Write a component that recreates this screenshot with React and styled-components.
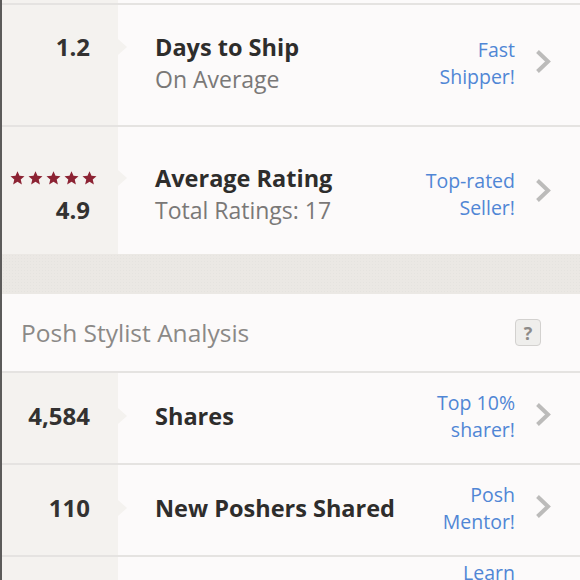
import React from "react";
import styled, { createGlobalStyle } from "styled-components";

const GlobalStyle = createGlobalStyle`
  html, body { margin: 0; padding: 0; background: #fcfafa; }
  body { font-family: "Open Sans", Lato, Arial, sans-serif; -webkit-font-smoothing: antialiased; }
`;

const SIDE = 118;
const SIDE_BG = "#f4f2ef";
const LINE = "#e5e3e1";

const Page = styled.div`
  height: 580px;
  overflow: hidden;
  border-left: 2px solid #5c5b5a;
  background: #fcfafa;
`;

const Row = styled.div`
  display: grid;
  grid-template-columns: ${SIDE - 2}px 1fr auto 16px;
  grid-template-rows: 1fr auto auto 1fr;
  height: ${(p) => p.$h}px;
  box-sizing: border-box;
  padding-top: ${(p) => p.$pt || 0}px;
  padding-bottom: ${(p) => p.$pb || 0}px;
  border-top: 2px solid ${LINE};
  padding-right: 29px;
  background: #fcfafa;
`;

const Side = styled.div`
  grid-column: 1;
  grid-row: 1 / -1;
  margin-top: ${(p) => -(p.$pt || 0)}px;
  margin-bottom: ${(p) => -(p.$pb || 0)}px;
  padding-top: ${(p) => p.$pt || 0}px;
  padding-bottom: ${(p) => p.$pb || 0}px;
  display: grid;
  grid-template-rows: subgrid;
  background: ${SIDE_BG};
  justify-items: end;
  align-items: center;
  padding-right: 28px;
`;

const Number = styled.div`
  grid-row: ${(p) => p.$line};
  align-self: center;
  font-weight: 700;
  font-size: 24px;
  line-height: 32px;
  color: #333231;
`;

const Stars = styled.div`
  grid-row: 2;
  display: flex;
  gap: 3px;
  margin-right: -7px;
`;

const Title = styled.div`
  grid-column: 2;
  grid-row: ${(p) => (p.$single ? "2 / 4" : "2")};
  align-self: center;
  position: relative;
  padding-left: 37px;
  font-weight: 700;
  font-size: 23.5px;
  line-height: 32px;
  color: #2e2d2c;
  white-space: nowrap;
  &::before {
    content: "";
    position: absolute;
    left: 0;
    top: 50%;
    transform: translateY(-50%);
    border-left: 9px solid ${SIDE_BG};
    border-top: 8px solid transparent;
    border-bottom: 8px solid transparent;
  }
`;

const Sub = styled.div`
  grid-column: 2;
  grid-row: 3;
  padding-left: 37px;
  font-size: 23px;
  line-height: 32px;
  color: #7a7877;
  white-space: nowrap;
`;

const Badge = styled.a`
  grid-column: 3;
  grid-row: 2 / 4;
  align-self: center;
  text-align: right;
  font-size: 19.5px;
  line-height: 27px;
  color: #5086d5;
  margin-right: 20px;
  text-decoration: none;
  cursor: pointer;
`;

const Chevron = styled.svg`
  grid-column: 4;
  grid-row: 2 / 4;
  align-self: center;
  width: 16px;
  height: 25px;
  margin-top: ${(p) => p.$dy || 0}px;
`;

const Band = styled.div`
  height: 40px;
  background: #ebe8e4;
  background-image: radial-gradient(rgba(0,0,0,0.025) 1px, transparent 1px);
  background-size: 3px 3px;
`;

const Header = styled.div`
  height: 77px;
  display: flex;
  align-items: center;
  justify-content: space-between;
  padding: 0 39px 0 19px;
  background: #fcfafa;
`;

const HeaderTitle = styled.h2`
  margin: 0;
  font-weight: 400;
  font-size: 24.5px;
  color: #8b8987;
`;

const HelpBox = styled.button`
  width: 26px;
  height: 27px;
  box-sizing: border-box;
  padding: 0;
  border: 1px solid #d3d1cf;
  border-radius: 4px;
  background: #efeeec;
  color: #8d8b89;
  font-family: inherit;
  font-weight: 700;
  font-size: 18px;
  line-height: 24px;
  text-align: center;
`;

const Stub = styled.div`
  height: 3px;
  display: grid;
  grid-template-columns: ${SIDE - 2}px 1fr;
  &::before {
    content: "";
    background: ${SIDE_BG};
  }
`;

const Star = () => (
  <svg width="15" height="14" viewBox="0 0 24 23">
    <path
      d="M12 0.3l3.3 7.4 8.2 0.8-6.2 5.4 1.9 8.1L12 17.7l-7.2 4.3 1.9-8.1L0.5 8.5l8.2-0.8z"
      fill="#8c2333"
    />
  </svg>
);

const Arrow = ({ dy }) => (
  <Chevron $dy={dy} viewBox="0 0 16 25">
    <path d="M2.5 2.5 L13 12.5 L2.5 22.5" fill="none" stroke="#bcbbba" strokeWidth="4" />
  </Chevron>
);

const StatRow = ({ h, pt, pb, number, stars, title, sub, badge, dy }) => (
  <Row $h={h} $pt={pt} $pb={pb}>
    <Side $pt={pt} $pb={pb}>
      {stars && (
        <Stars>
          {[0, 1, 2, 3, 4].map((i) => (
            <Star key={i} />
          ))}
        </Stars>
      )}
      {number && <Number $line={stars ? "3" : sub ? "2" : "2 / 4"}>{number}</Number>}
    </Side>
    {title && <Title $single={!sub}>{title}</Title>}
    {sub && <Sub>{sub}</Sub>}
    <Badge>
      {badge.map((l, i) => (
        <div key={i}>{l}</div>
      ))}
    </Badge>
    <Arrow dy={dy} />
  </Row>
);

export default function App() {
  return (
    <>
      <GlobalStyle />
      <Page>
        <Stub />
        <StatRow h={122} pb={4} number="1.2" title="Days to Ship" sub="On Average" badge={["Fast", "Shipper!"]} dy={-4} />
        <StatRow h={129} pt={6} stars number="4.9" title="Average Rating" sub="Total Ratings: 17" badge={["Top-rated", "Seller!"]} dy={-6} />
        <Band />
        <Header>
          <HeaderTitle>Posh Stylist Analysis</HeaderTitle>
          <HelpBox>?</HelpBox>
        </Header>
        <StatRow h={92} pb={5} number="4,584" title="Shares" badge={["Top 10%", "sharer!"]} dy={-2} />
        <StatRow h={92} pb={5} number="110" title="New Poshers Shared" badge={["Posh", "Mentor!"]} dy={-2} />
        <StatRow h={92} pb={5} badge={["Learn", "how to", "share!"]} />
      </Page>
    </>
  );
}
